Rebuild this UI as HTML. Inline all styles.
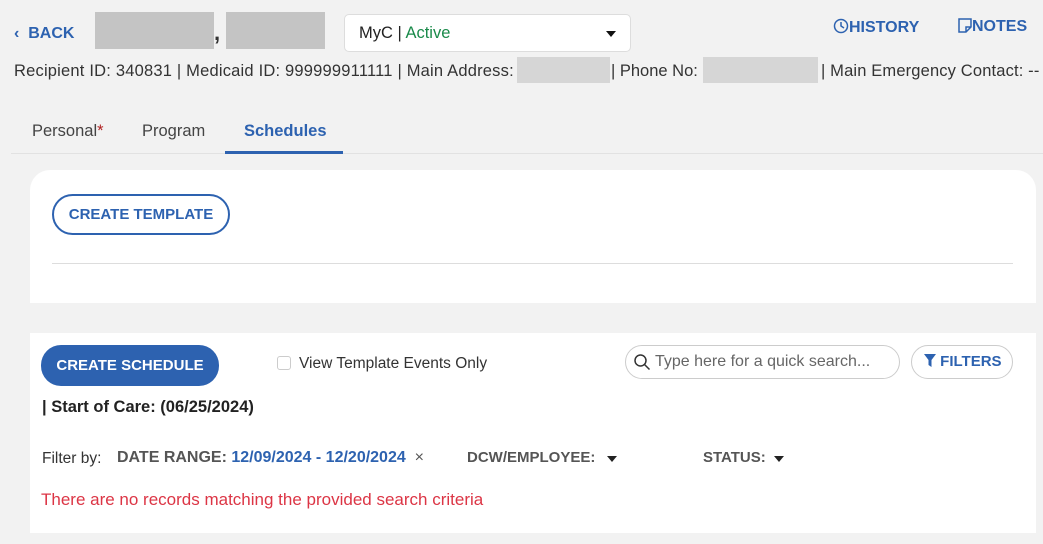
<!DOCTYPE html>
<html><head><style>
*{margin:0;padding:0;box-sizing:border-box}
body{width:1043px;height:544px;background:#f2f2f2;font-family:"Liberation Sans",sans-serif;position:relative;overflow:hidden;color:#333}
.a{position:absolute;white-space:nowrap}
.blue{color:#2d62b0}
.blur{background:#c8c8c8;position:absolute}
</style></head><body>
<div class="a blue" style="left:14px;top:25px;font-size:16px;font-weight:bold">&#x2039;&nbsp; BACK</div>
<div class="blur" style="left:95px;top:12px;width:119px;height:37px;background:#c4c4c4"></div>
<div class="a" style="left:214px;top:20px;font-size:22px;font-weight:bold;color:#333">,</div>
<div class="blur" style="left:226px;top:12px;width:99px;height:37px;background:#c4c4c4"></div>
<div class="a" style="left:344px;top:14px;width:287px;height:38px;background:#fff;border:1px solid #ddd;border-radius:5px"></div>
<div class="a" style="left:359px;top:24px;font-size:16.5px;color:#222">MyC | <span style="color:#1a8a4a">Active</span></div>
<div class="a" style="left:606px;top:31px;width:0;height:0;border-left:5px solid transparent;border-right:5px solid transparent;border-top:6px solid #111"></div>
<div class="a blue" style="left:833px;top:18px;font-size:16px;font-weight:bold"><svg width="16" height="16" viewBox="0 0 16 16" style="vertical-align:-2px"><circle cx="8" cy="8" r="6.5" fill="none" stroke="#2d62b0" stroke-width="1.5"/><path d="M8 4v4l3 2" fill="none" stroke="#2d62b0" stroke-width="1.5"/></svg>HISTORY</div>
<div class="a blue" style="left:958px;top:18px;font-size:16px;font-weight:bold"><svg width="14" height="15" viewBox="0 0 14 15" style="vertical-align:-2px"><path d="M1 1h12v8l-5 5H1z M8 14v-5h5" fill="none" stroke="#2d62b0" stroke-width="1.5"/></svg>NOTES</div>
<div class="a" style="left:14px;top:62px;font-size:16.5px;letter-spacing:0.2px;color:#333">Recipient ID: 340831 | Medicaid ID: 999999911111 | Main Address:</div>
<div class="blur" style="left:517px;top:57px;width:93px;height:26px;background:#d6d6d6"></div>
<div class="a" style="left:611px;top:62px;font-size:16.5px">| Phone No:</div>
<div class="blur" style="left:703px;top:57px;width:115px;height:26px;background:#d6d6d6"></div>
<div class="a" style="left:821px;top:62px;font-size:16.5px;letter-spacing:0.15px">| Main Emergency Contact: --</div>
<div class="a" style="left:32px;top:122px;font-size:16.5px;color:#444">Personal<span style="color:#b02020">*</span></div>
<div class="a" style="left:142px;top:122px;font-size:16.5px;color:#444">Program</div>
<div class="a blue" style="left:244px;top:122px;font-size:16.5px;font-weight:bold">Schedules</div>
<div class="a" style="left:11px;top:153px;width:1032px;height:1px;background:#e2e2e2"></div>
<div class="a" style="left:225px;top:151px;width:118px;height:3px;background:#2d62b0"></div>
<div class="a" style="left:30px;top:170px;width:1006px;height:133px;background:#fff;border-radius:20px 20px 0 0"></div>
<div class="a blue" style="left:52px;top:194px;width:178px;height:41px;border:2px solid #2d62b0;border-radius:21px;font-size:15px;font-weight:bold;text-align:center;line-height:37px">CREATE TEMPLATE</div>
<div class="a" style="left:52px;top:263px;width:961px;height:1px;background:#ddd"></div>
<div class="a" style="left:30px;top:333px;width:1006px;height:200px;background:#fff"></div>
<div class="a" style="left:41px;top:345px;width:178px;height:41px;background:#2d62b0;border-radius:20px;color:#fff;font-size:15px;font-weight:bold;text-align:center;line-height:41px">CREATE SCHEDULE</div>
<div class="a" style="left:277px;top:356px;width:14px;height:14px;border:1px solid #ccc;border-radius:3px"></div>
<div class="a" style="left:299px;top:355px;font-size:15.5px;color:#333">View Template Events Only</div>
<div class="a" style="left:625px;top:345px;width:275px;height:34px;border:1px solid #ccc;border-radius:17px"></div>
<div class="a" style="left:633px;top:353px"><svg width="18" height="18" viewBox="0 0 18 18"><circle cx="7.5" cy="7.5" r="5.5" fill="none" stroke="#333" stroke-width="1.5"/><path d="M11.5 11.5l5 5" stroke="#333" stroke-width="1.5"/></svg></div>
<div class="a" style="left:655px;top:353px;font-size:16px;color:#666">Type here for a quick search...</div>
<div class="a blue" style="left:911px;top:345px;width:102px;height:34px;border:1px solid #ccc;border-radius:17px;font-size:15px;font-weight:bold;line-height:32px;padding-left:12px"><svg width="12" height="13" viewBox="0 0 12 13" style="vertical-align:-1px"><path d="M0 0h12L7.5 6v7L4.5 11V6z" fill="#2d62b0"/></svg> FILTERS</div>
<div class="a" style="left:42px;top:398px;font-size:16.5px;font-weight:bold;color:#222">| Start of Care: (06/25/2024)</div>
<div class="a" style="left:42px;top:450px;font-size:15.5px;color:#333">Filter by:</div>
<div class="a" style="left:117px;top:449px;font-size:16px;font-weight:bold;color:#555">DATE RANGE: <span class="blue">12/09/2024 - 12/20/2024</span> <span style="font-weight:normal;color:#555">&nbsp;×</span></div>
<div class="a" style="left:467px;top:449px;font-size:15px;font-weight:bold;color:#555">DCW/EMPLOYEE:</div>
<div class="a" style="left:607px;top:456px;border-left:5px solid transparent;border-right:5px solid transparent;border-top:6px solid #222"></div>
<div class="a" style="left:703px;top:449px;font-size:15px;font-weight:bold;color:#555">STATUS:</div>
<div class="a" style="left:774px;top:456px;border-left:5px solid transparent;border-right:5px solid transparent;border-top:6px solid #222"></div>
<div class="a" style="left:41px;top:490px;font-size:17px;color:#dc3545">There are no records matching the provided search criteria</div>
</body></html>
